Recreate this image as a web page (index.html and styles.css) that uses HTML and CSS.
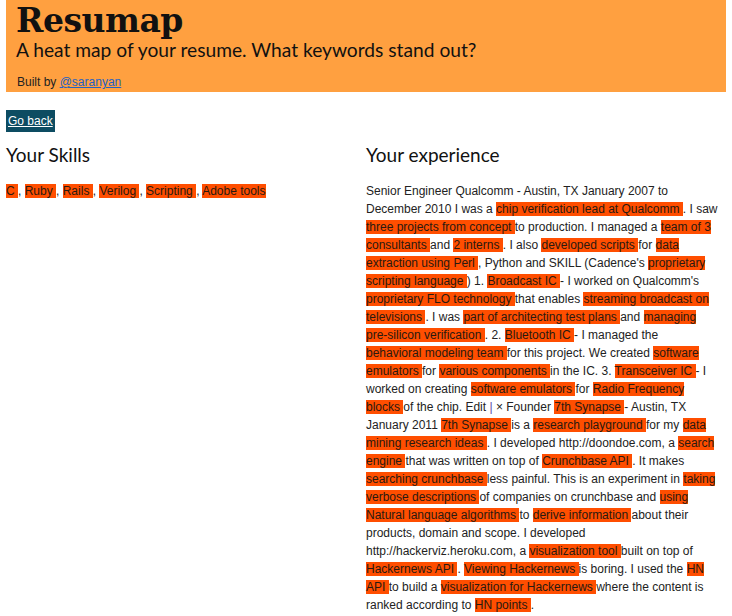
FILE: index.html
```html
<!DOCTYPE html>
<html>
<head>
<meta charset="utf-8">
<title>Resumap</title>
<link rel="stylesheet" href="styles.css">
</head>
<body>
<header class="masthead">
  <h1 class="brand">Resumap</h1>
  <p class="tagline">A heat map of your resume. What keywords stand out?</p>
  <p class="byline">Built by <a href="#">@saranyan</a></p>
</header>
<nav class="toolbar"><a class="back" href="#">Go back</a></nav>
<main class="columns">
  <section class="col skills">
    <h2 class="col-title">Your Skills</h2>
    <p class="text"><span class="hot">C </span>, <span class="hot">Ruby </span>, <span class="hot">Rails </span>, <span class="hot">Verilog </span>, <span class="hot">Scripting </span>, <span class="hot">Adobe tools</span></p>
  </section>
  <section class="col experience">
    <h2 class="col-title">Your experience</h2>
    <p class="text lines">Senior Engineer Qualcomm - Austin, TX January 2007 to<br>December 2010 I was a <span class="hot">chip verification lead at Qualcomm </span>. I saw<br><span class="hot">three projects from concept </span>to production. I managed a <span class="hot">team of 3<br>consultants </span>and <span class="hot">2 interns </span>. I also <span class="hot">developed scripts </span>for <span class="hot">data<br>extraction using Perl </span>, Python and SKILL (Cadence's <span class="hot">proprietary<br>scripting language </span>) 1. <span class="hot">Broadcast IC </span>- I worked on Qualcomm's<br><span class="hot">proprietary FLO technology </span>that enables <span class="hot">streaming broadcast on<br>televisions </span>. I was <span class="hot">part of architecting test plans </span>and <span class="hot">managing<br>pre-silicon verification </span>. 2. <span class="hot">Bluetooth IC </span>- I managed the<br><span class="hot">behavioral modeling team </span>for this project. We created <span class="hot">software<br>emulators </span>for <span class="hot">various components </span>in the IC. 3. <span class="hot">Transceiver IC </span>- I<br>worked on creating <span class="hot">software emulators </span>for <span class="hot">Radio Frequency<br>blocks </span>of the chip. Edit <span class="sep">|</span> × Founder <span class="hot">7th Synapse </span>- Austin, TX<br>January 2011 <span class="hot">7th Synapse </span>is a <span class="hot">research playground </span>for my <span class="hot">data<br>mining research ideas </span>. I developed http://doondoe.com, a <span class="hot">search<br>engine </span>that was written on top of <span class="hot">Crunchbase API </span>. It makes<br><span class="hot">searching crunchbase </span>less painful. This is an experiment in <span class="hot">taking<br>verbose descriptions </span>of companies on crunchbase and <span class="hot">using<br>Natural language algorithms </span>to <span class="hot">derive information </span>about their<br>products, domain and scope. I developed<br>http://hackerviz.heroku.com, a <span class="hot">visualization tool </span>built on top of<br><span class="hot">Hackernews API </span>. <span class="hot">Viewing Hackernews </span>is boring. I used the <span class="hot">HN<br>API </span>to build a <span class="hot">visualization for Hackernews </span>where the content is<br>ranked according to <span class="hot">HN points </span>.</p>
  </section>
</main>
</body>
</html>
```

FILE: styles.css
```css
html, body {
  margin: 0;
  padding: 0;
  background: #ffffff;
}
body {
  padding: 0 6px;
  font-family: "Liberation Sans", Arial, Helvetica, sans-serif;
  font-size: 12px;
  color: #222222;
}
.masthead {
  background: #ffa040;
  height: 92px;
  box-sizing: border-box;
  padding: 0 10px;
  color: #111111;
}
.brand {
  margin: 0;
  padding-top: 4px;
  font-family: "DejaVu Serif", serif;
  font-weight: bold;
  font-size: 33px;
  line-height: 34px;
  letter-spacing: -0.5px;
}
.tagline {
  margin: 0;
  padding-top: 2px;
  font-family: Lato, "Open Sans", sans-serif;
  font-size: 19.2px;
  line-height: 20px;
}
.byline {
  margin: 0;
  padding-top: 15px;
  padding-left: 1px;
  font-size: 12px;
  line-height: 14px;
  color: #222222;
}
.byline a {
  color: #2462c2;
}
.toolbar {
  padding-top: 18px;
  height: 22px;
}
.back {
  display: inline-block;
  background: #0d4c62;
  color: #ffffff;
  font-size: 12px;
  line-height: 22px;
  padding: 0 2px;
}
.columns {
  display: grid;
  grid-template-columns: 360px 360px;
}
.col-title {
  margin: 11px 0 0;
  font-family: Lato, "Open Sans", sans-serif;
  font-weight: normal;
  font-size: 19px;
  line-height: 24px;
  color: #111111;
}
.text {
  margin: 15px 0 0;
  line-height: 18px;
}
.lines {
  white-space: nowrap;
}
.hot {
  background: #ff4e00;
  color: #2a1a10;
}
.sep {
  color: #5b4aa8;
}
```
